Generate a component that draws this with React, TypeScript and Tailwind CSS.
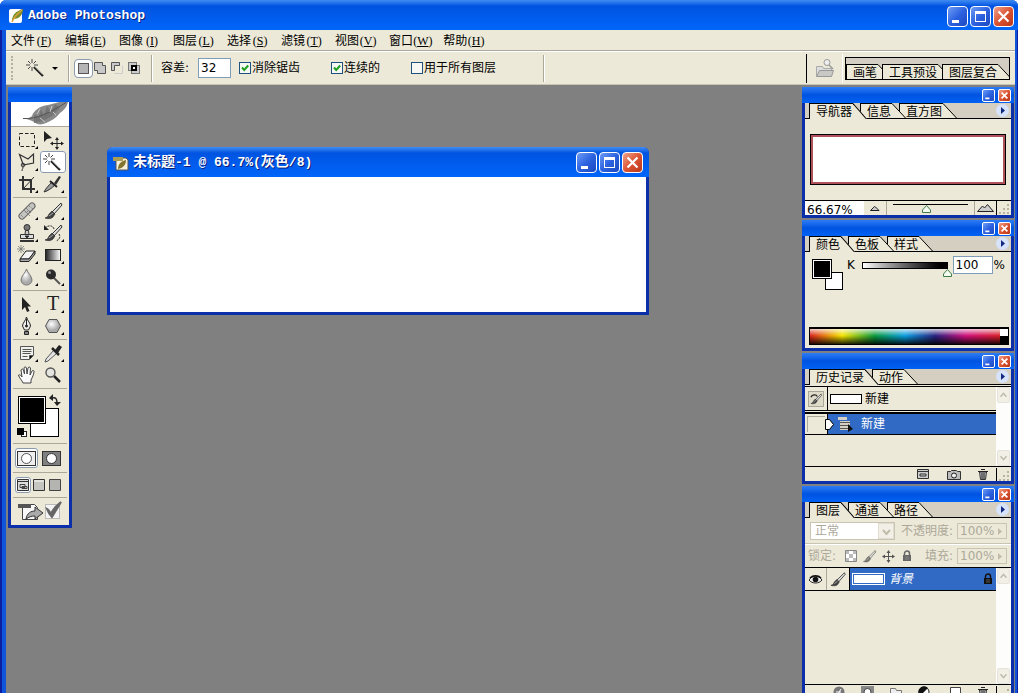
import React from 'react';
import { clsx } from 'clsx';

const MONO = "font-['Liberation_Mono','Noto_Sans_CJK_SC',monospace]";

const menus = [
  { name: '文件', key: 'F' },
  { name: '编辑', key: 'E' },
  { name: '图像', key: 'I' },
  { name: '图层', key: 'L' },
  { name: '选择', key: 'S' },
  { name: '滤镜', key: 'T' },
  { name: '视图', key: 'V' },
  { name: '窗口', key: 'W' },
  { name: '帮助', key: 'H' },
];

function Wand() {
  return (
    <g>
      <path d="M11 10l9 9" stroke="#222" strokeWidth="2.2" />
      <path d="M11.5 9.5l8 8" stroke="#aaa" strokeWidth="0.8" />
      <path d="M9 2v4M9 10v4M3 8h4M11 8h4M5 4l2.5 2.5M13 4l-2.5 2.5M5 12l2.5-2.5" stroke="#444" />
    </g>
  );
}

function Brush() {
  return (
    <g>
      <path d="M21 3L12 12l2 2L22 5z" fill="#ddd" stroke="#333" />
      <path d="M12 11l3 3-2 3c-2 2-5 2-8 1 3-1 3-2 4-4z" fill="#444" stroke="#222" strokeWidth="0.6" />
      <path d="M9 16l4-3" stroke="#aaa" />
    </g>
  );
}

const toolGroups = [
  [
    { name: '矩形选框', more: true, art: <rect x="5.5" y="4.5" width="15" height="13" fill="none" stroke="#222" strokeDasharray="3.5 2" /> },
    {
      name: '移动',
      art: (
        <g>
          <path d="M4 2v11l3-3 5-1z" fill="#222" />
          <path d="M17 10v9M12.500 14.500h9" stroke="#222" />
          <path d="M17 8l2 3h-4zM17 21l2-3h-4zM10 14.500l3-2v4zM24 14.500l-3-2v4z" fill="#222" />
        </g>
      ),
    },
    {
      name: '多边形套索',
      more: true,
      art: (
        <g fill="none" stroke="#333">
          <path d="M9 13L5.5 3.5 14 8l5.500-5v9L9 14z" strokeWidth="1.2" />
          <circle cx="9" cy="14" r="1.800" />
          <path d="M9 16c0 2-1 2-1 4" />
        </g>
      ),
    },
    { name: '魔棒', active: true, art: <Wand /> },
    {
      name: '裁切',
      more: true,
      art: (
        <g fill="none" stroke="#333">
          <path d="M9 3v13h12M5 7h12v13" strokeWidth="2" />
          <path d="M10 15l10-11" />
        </g>
      ),
    },
    {
      name: '切片',
      more: true,
      art: (
        <g>
          <path d="M4 19c2-4 5-7 8-10l3 3c-3 3-7 6-11 7z" fill="#999" stroke="#333" />
          <path d="M14 10l5-7 2 1-5 8z" fill="#333" />
          <path d="M10 8l7 6" stroke="#222" strokeWidth="2" />
        </g>
      ),
    },
  ],
  [
    {
      name: '修复画笔',
      more: true,
      art: (
        <g>
          <path d="M8 16L18 6" stroke="#666" strokeWidth="7" strokeLinecap="round" />
          <path d="M8 16L18 6" stroke="#c4c4c0" strokeWidth="5" strokeLinecap="round" />
          <path d="M10 10l6 6M12 8l5 5" stroke="#777" strokeWidth="0.8" />
          <path d="M7 15l3 3M15 6l4 3M11 12l5-1" stroke="#777" strokeDasharray="1 1" />
        </g>
      ),
    },
    { name: '画笔', more: true, art: <Brush /> },
    {
      name: '仿制图章',
      more: true,
      art: (
        <g stroke="#333">
          <circle cx="13" cy="5.500" r="3" fill="#777" />
          <path d="M11.500 8.500h3l.5 4h-4z" fill="#ccc" />
          <path d="M6.500 12.500h13v4h-13z" fill="#ddd" />
          <path d="M6 19h14" strokeWidth="2" />
          <path d="M11 14h4l-2 2z" fill="#222" />
        </g>
      ),
    },
    {
      name: '历史记录画笔',
      more: true,
      art: (
        <g>
          <Brush />
          <path d="M5 6c3-3 8-3 9 1M19 12c2 3 0 6-3 7" fill="none" stroke="#222" strokeDasharray="2 1" />
          <path d="M4 3v5h5z" fill="#222" />
        </g>
      ),
    },
    {
      name: '橡皮擦',
      more: true,
      art: (
        <g stroke="#222">
          <path d="M6 15l6-8h9l-6 8z" fill="#f4f4f4" />
          <path d="M6 15v2.500h9L21 10V7l-6 8H6" fill="#aaa" />
          <path d="M7 1v8M3 5h8M4 2l6 6M10 2L4 8" stroke="#777" strokeWidth="0.8" />
        </g>
      ),
    },
    { name: '渐变', more: true, art: <rect x="5.500" y="5.500" width="15" height="11" fill="url(#ramp)" stroke="#222" /> },
    { name: '模糊', more: true, art: <path d="M12.500 3c1 4 5.500 7 5.500 11a5.500 5 0 0 1-11 0c0-4 4.500-7 5.500-11z" fill="url(#ball)" stroke="#777" /> },
    {
      name: '减淡',
      more: true,
      art: (
        <g>
          <path d="M13 11l7 7" stroke="#555" strokeWidth="2" />
          <circle cx="11" cy="8.500" r="5" fill="#2a2a2a" />
          <circle cx="9.500" cy="6.500" r="1.500" fill="#999" />
        </g>
      ),
    },
  ],
  [
    { name: '路径选择', more: true, art: <path d="M8 4v13l3-3 2 5 2.500-1-2-4.500H17z" fill="#222" /> },
    {
      name: '文字',
      more: true,
      art: (
        <text x="13" y="17" textAnchor="middle" fill="#222" className="font-['Liberation_Serif',serif] text-[20px]">
          T
        </text>
      ),
    },
    {
      name: '钢笔',
      more: true,
      art: (
        <g stroke="#222">
          <path d="M12.500 2c1 4 4 6 4 9l-2 4h-4l-2-4c0-3 3-5 4-9z" fill="#eee" />
          <path d="M12.500 4v7" />
          <circle cx="12.500" cy="11" r="1" fill="#222" />
          <path d="M10.500 16.500h4v3h-4z" fill="#888" />
        </g>
      ),
    },
    { name: '多边形', more: true, art: <path d="M9 4.500h8l3.500 6.500-3.500 6.500H9L5.500 11z" fill="url(#ball)" stroke="#555" /> },
  ],
  [
    {
      name: '注释',
      more: true,
      art: (
        <g stroke="#555">
          <path d="M6.500 4.500h13v9l-4 4h-9z" fill="#f0f0ec" />
          <path d="M19 13.500h-3.500V17M8.500 7.500h9M8.500 9.500h9M8.500 11.500h8M8.500 14.500h5" />
        </g>
      ),
    },
    {
      name: '吸管',
      more: true,
      art: (
        <g>
          <path d="M14 8L6 17l-1 3 3-1 9-8z" fill="#e4e4e4" stroke="#555" />
          <path d="M12 6l7 7" stroke="#222" strokeWidth="2.500" />
          <path d="M15 8l4-5 3 2-4 6z" fill="#222" />
        </g>
      ),
    },
    {
      name: '抓手',
      art: (
        <path
          d="M9 19c-1-3-4-5-4.500-8 1.500-1 3 1 3.500 2L7 6c1-1.500 2-1 2.500 0l1 4-.5-6c.5-1.500 2-1.500 2.500 0l.5 6 1-6c1-1.500 2-1 2.500 0l-.5 7 2-4c1-1 2.500-.5 2 1-.5 3-1.500 5-3 8v3z"
          fill="#fafafa"
          stroke="#444"
        />
      ),
    },
    {
      name: '缩放',
      art: (
        <g>
          <path d="M14 12l6 6" stroke="#222" strokeWidth="2.500" />
          <circle cx="10.500" cy="8.500" r="4.500" fill="#e4e4e0" stroke="#555" strokeWidth="1.400" />
        </g>
      ),
    },
  ],
];

function Caption({ small = false, noMax = false }: { small?: boolean; noMax?: boolean }) {
  const size = small ? 'size-[13px] rounded-[2px]' : 'size-[21px] rounded-[4px]';
  return (
    <div className={clsx('flex', small ? 'gap-[3px]' : 'gap-[2px]')}>
      <button aria-label="最小化" className={clsx(size, 'border border-white bg-linear-to-br from-[#6f9cf5] via-[#2d62e0] to-[#1c48c0]')}>
        <svg viewBox="0 0 19 19" className="block size-full"><path d="M4 13h7v3H4z" fill="#fff" /></svg>
      </button>
      {!noMax && (
        <button aria-label="最大化" className={clsx(size, 'border border-white bg-linear-to-br from-[#6f9cf5] via-[#2d62e0] to-[#1c48c0]')}>
          <svg viewBox="0 0 19 19" className="block size-full"><path d="M4 4h11v11H4zM5 7v7h9V7z" fill="#fff" fillRule="evenodd" /></svg>
        </button>
      )}
      <button aria-label="关闭" className={clsx(size, 'border border-white bg-linear-to-br from-[#eda08a] via-[#dc5432] to-[#b8371a]')}>
        <svg viewBox="0 0 19 19" className="block size-full"><path d="M4.500 4.500l10 10M14.500 4.500l-10 10" stroke="#fff" strokeWidth={small ? 3 : 2.2} /></svg>
      </button>
    </div>
  );
}

function Tab({ name, active = false, className }: { name: string; active?: boolean; className?: string }) {
  return (
    <button className={clsx('flex shrink-0 items-stretch', active ? 'h-4' : 'h-[15px]', className)}>
      <span className="overflow-hidden border-l border-t border-black bg-[#ece9d8] pl-[6px] pr-px leading-[16px]">{name}</span>
      <svg width="14" viewBox="0 0 14 15" preserveAspectRatio="none" className="block h-full">
        <path d="M0 0L14 15H0z" fill="#ece9d8" />
        <path d="M0 .5L13.500 15" stroke="#000" />
      </svg>
    </button>
  );
}

const stack = ['z-30', 'z-20', 'z-10'];

function Palette({ tabs, className, children }: { tabs: string[]; className?: string; children: React.ReactNode }) {
  return (
    <section className={clsx('flex flex-col border-x-[3px] border-b-[3px] border-[#0a2fa8] bg-[#ece9d8]', className)}>
      <header className="-mx-[3px] flex h-4 shrink-0 items-center justify-end bg-linear-to-b from-[#2c7cf6] via-[#0053e1] to-[#0062f5] pr-[3px]">
        <Caption small noMax />
      </header>
      <div className="flex h-4 shrink-0 items-start border-b border-black bg-[#d4cfc0] pl-1">
        {tabs.map((t, i) => (
          <Tab key={t} name={t} active={i === 0} className={clsx('relative', stack[i], i > 0 && '-ml-[7px]')} />
        ))}
        <button aria-label="面板菜单" className="ml-auto mr-[2px] mt-px grid size-[13px] place-items-center rounded-full bg-[#d7e2fb]">
          <svg width="5" height="7"><path d="M1 0l4 3.500L1 7z" fill="#112a80" /></svg>
        </button>
      </div>
      {children}
    </section>
  );
}

function Scroller() {
  return (
    <div className="flex w-[15px] shrink-0 flex-col justify-between bg-[#fdfdfb] px-px">
      {['M3 9l3.500-4L10 9', 'M3 5l3.500 4L10 5'].map((d) => (
        <button key={d} aria-label="滚动" className="h-4 rounded-[2px] border border-[#e6e4da] bg-[#f1efe6]">
          <svg viewBox="0 0 13 14" className="block size-full"><path d={d} fill="none" stroke="#bdbbae" strokeWidth="1.800" /></svg>
        </button>
      ))}
    </div>
  );
}

function Grip() {
  return (
    <svg width="14" height="13" className="block shrink-0">
      <path d="M10 3h2v2h-2zM6 7h2v2H6zM10 7h2v2h-2zM2 11h2v2H2zM6 11h2v2H6zM10 11h2v2h-2z" fill="#b8b4a2" />
    </svg>
  );
}

function Trash() {
  return (
    <svg width="12" height="12" className="block">
      <path d="M2.500 4h7l-1 7.500h-5z" fill="#bbb" stroke="#333" />
      <path d="M1 3.500h10M4 1.500h4M5 5v6M7 5v6" stroke="#222" />
    </svg>
  );
}

function Lock({ color = '#666' }: { color?: string }) {
  return (
    <svg width="10" height="12" className="block shrink-0">
      <path d="M2.500 6V3.500a2.500 2.500 0 0 1 5 0V6" fill="none" stroke={color} strokeWidth="1.500" />
      <rect x="1" y="5" width="8" height="6" fill={color} />
      <path d="M3 7h4M3 9h4" stroke="#aaa" strokeWidth="0.500" />
    </svg>
  );
}

function Thumb() {
  return (
    <svg width="9" height="8" className="block">
      <path d="M4.500 .5L8.500 5v2.500h-8V5z" fill="#f4fbf0" stroke="#3f7d46" />
    </svg>
  );
}

function Check({ id, label, on = false, className }: { id: string; label: string; on?: boolean; className?: string }) {
  return (
    <div className={clsx('flex items-center gap-px', className)}>
      <div className="grid size-3">
        <input
          id={id}
          type="checkbox"
          defaultChecked={on}
          className="peer col-start-1 row-start-1 size-3 appearance-none border border-[#1c5180] bg-[#f7f7f4]"
        />
        <svg viewBox="0 0 12 12" className="pointer-events-none invisible col-start-1 row-start-1 size-3 peer-checked:visible">
          <path d="M3 5.500l2.200 2.500L9.200 3.500" fill="none" stroke="#21a121" strokeWidth="2" />
        </svg>
      </div>
      <label htmlFor={id}>{label}</label>
    </div>
  );
}

function Divider({ className }: { className?: string }) {
  return <div className={clsx('h-[27px] w-[2px] border-l border-[#aca899] bg-white', className)} />;
}

const unions = [
  { name: '新选区', art: <rect x="3.500" y="3.500" width="10" height="10" fill="#b5b5b5" stroke="#555" /> },
  { name: '添加到选区', art: <path d="M2.500 2.500h8v3h3v8h-8v-3h-3z" fill="#c8c8c8" stroke="#555" /> },
  { name: '从选区减去', art: <g><path d="M2.500 10.500v-8h8v3h-5v5z" fill="#c8c8c8" stroke="#555" /><path d="M5.500 13.500h8v-8" fill="none" stroke="#ccc" /></g> },
  { name: '与选区交叉', art: <g fill="#ccc" stroke="#777"><rect x="2.500" y="2.500" width="8" height="8" /><rect x="5.500" y="5.500" width="8" height="8" /><rect x="6" y="6" width="4" height="4" fill="#fff" stroke="#000" strokeWidth="2" /></g> },
];

function OptionsBar() {
  return (
    <div className="flex h-[33px] shrink-0 items-center border-b border-[#c9c5b4] bg-[#ece9d8]">
      <div className="ml-[5px] h-6 w-[3px] border-l-2 border-dotted border-[#b5b19f]" />
      <button aria-label="魔棒" className="flex w-[54px] items-center gap-[6px] pl-[10px]">
        <svg width="22" height="20" viewBox="1 1 22 20"><Wand /></svg>
        <svg width="6" height="3"><path d="M0 0h6L3 3z" /></svg>
      </button>
      <Divider />
      <div className="ml-[5px] flex">
        {unions.map((u, i) => (
          <button key={u.name} aria-label={u.name} className={clsx('size-[17px]', i === 0 && 'rounded-[3px] bg-white outline outline-[#8a9bb0]')}>
            <svg viewBox="0 0 17 17" className="block size-full">{u.art}</svg>
          </button>
        ))}
      </div>
      <Divider className="ml-2" />
      <label htmlFor="tolerance" className="ml-2">容差:</label>
      <input id="tolerance" defaultValue="32" className="ml-[9px] h-5 w-[33px] border border-[#7f9db9] bg-white px-[2px]" />
      <Check id="aa" label="消除锯齿" on className="ml-2" />
      <Check id="contig" label="连续的" on className="ml-[31px]" />
      <Check id="all" label="用于所有图层" className="ml-[31px]" />
      <Divider className="ml-[47px]" />

      <div className="ml-auto h-[29px] w-px bg-black" />
      <button aria-label="文件浏览器" className="ml-2">
        <svg width="20" height="20">
          <path d="M1.500 18V8.500h6l1 2h8V18z" fill="#ddd" stroke="#aaa" />
          <path d="M1.500 18.500l3-6h14l-2 6z" fill="#c8c8c4" stroke="#999" />
          <circle cx="12" cy="4.500" r="3" fill="#eee" stroke="#999" />
          <path d="M14 7l4 4" stroke="#999" strokeWidth="1.500" />
        </svg>
      </button>
      <div className="ml-[7px] h-[29px] w-px bg-white" />
      <div className="ml-[2px] mr-[5px] flex h-[23px] w-[165px] items-end overflow-hidden border border-black bg-[#d4cdc4]">
        <Tab name="画笔" />
        <Tab name="工具预设" className="-ml-[10px]" />
        <Tab name="图层复合" className="-ml-[10px]" />
      </div>
    </div>
  );
}

function Toolbox() {
  return (
    <aside className="w-16 border-x-[3px] border-b-[3px] border-[#0a2fa8] bg-[#ece9d8]">
      <div className="-mx-[3px] h-[15px] bg-linear-to-b from-[#2c7cf6] via-[#0053e1] to-[#0062f5]" />
      <div className="h-[25px] border-b border-[#aca899] bg-white">
        <svg width="58" height="24" className="block">
          <defs>
            <linearGradient id="ramp"><stop stopColor="#222" /><stop offset="1" stopColor="#fff" /></linearGradient>
            <radialGradient id="ball" cx=".4" cy=".35"><stop stopColor="#fff" /><stop offset="1" stopColor="#aaa" /></radialGradient>
          </defs>
          <path d="M11 16c5 1 8 0 10-2 2-6 8-10 16-11 6-1 8-3 14-3h6c-1 5-4 8-8 11-4 5-9 8-14 10-4 2-9 2-12-1-3-2-7-3-12-4z" fill="#8a8a8a" />
          <path d="M23 13l5 1 2-7 3 6 3-9 4 6 4-8 5 4-8 8-9 5-9 2z" fill="#757575" />
          <path d="M12 16.500c14 1 27-6 43-16" fill="none" stroke="#555" />
          <path d="M26 12l3-5M39 10l2-6M29 16l5 4M42 10l3 3" stroke="#c8c8c8" />
        </svg>
      </div>
      {toolGroups.map((group, i) => (
        <div key={i} className="mx-[2px] flex flex-wrap border-b border-[#aca899] px-px py-[2px]">
          {group.map((tool) => (
            <button
              key={tool.name}
              aria-label={tool.name}
              className={clsx('h-[22px] w-1/2', tool.active && 'rounded-[3px] bg-white outline -outline-offset-1 outline-[#8a9bb0]')}
            >
              <svg viewBox="0 0 26 22" className="block size-full">
                {tool.art}
                {tool.more && <path d="M24 17v3h-3z" fill="#000" />}
              </svg>
            </button>
          ))}
        </div>
      ))}
      <div className="mx-[2px] h-[55px] border-b border-[#aca899]">
        <svg width="52" height="54" className="block">
          <rect x="17.500" y="19.500" width="28" height="28" fill="#fff" stroke="#000" />
          <rect x="5.500" y="7.500" width="27" height="27" fill="#fff" stroke="#000" />
          <rect x="7" y="9" width="24" height="24" />
          <path d="M39 9c4-1 5 1 5 5" fill="none" stroke="#222" strokeWidth="1.500" />
          <path d="M36 9l4-4v7zM41 13h7l-4 4z" fill="#222" />
          <rect x="8.500" y="42.500" width="5" height="5" fill="#fff" stroke="#222" />
          <rect x="4" y="39" width="7" height="7" />
        </svg>
      </div>
      <div className="mx-[2px] flex h-[29px] items-center gap-[3px] border-b border-[#aca899] pl-[2px]">
        <button aria-label="标准模式" className="grid h-5 w-[23px] place-items-center rounded-[3px] border border-[#8a9bb0] bg-white">
          <svg width="19" height="15"><rect x=".5" y=".5" width="18" height="14" fill="#eee" stroke="#333" /><circle cx="9.500" cy="7.500" r="5" fill="#fff" stroke="#555" /></svg>
        </button>
        <button aria-label="快速蒙版" className="grid h-5 w-[21px] place-items-center">
          <svg width="19" height="15"><rect x=".5" y=".5" width="18" height="14" fill="#808080" stroke="#333" /><circle cx="9.500" cy="7.500" r="5" fill="#fff" stroke="#333" /></svg>
        </button>
      </div>
      <div className="mx-[2px] flex h-[25px] items-center border-b border-[#aca899] pl-[2px]">
        <button aria-label="标准屏幕" className="grid size-4 place-items-center rounded-[3px] border border-[#8a9bb0] bg-white">
          <svg width="12" height="12"><path d="M.5 .5h11v11H.5zM.5 2.500h11" fill="#ddd" stroke="#333" /><path d="M3 5.500h5v3H3zM5 7.500h5v2H5z" fill="none" stroke="#444" /></svg>
        </button>
        <button aria-label="带菜单栏全屏" className="grid size-4 place-items-center">
          <svg width="12" height="12"><path d="M.5 .5h11v11H.5z" fill="#c6c6c0" stroke="#333" /><path d="M1 2h10" stroke="#fff" /></svg>
        </button>
        <button aria-label="全屏" className="grid size-4 place-items-center">
          <svg width="12" height="12"><path d="M.5 .5h11v11H.5z" fill="#b4b4b0" stroke="#444" /></svg>
        </button>
      </div>
      <button aria-label="跳转到 ImageReady" className="block h-[27px] w-full">
        <svg viewBox="0 0 58 27" className="block size-full">
          <path d="M11.500 6.500h12l3 3v12h-15z" fill="#f8f8f8" stroke="#444" />
          <path d="M7 6h13v4H7z" fill="#555" />
          <path d="M15 21c1-6 5-8 9-8V9l8 6-8 6v-3c-4 0-6 1-9 3z" fill="#aaa" stroke="#333" />
          <rect x="34.500" y="6.500" width="14" height="14" fill="#f4f4f4" stroke="#bbb" />
          <path d="M36 11c2 1 3 3 4 5 2-5 6-9 10-12-3 5-6 10-9 15-2-2-4-5-5-8z" fill="#666" stroke="#666" strokeWidth="2" />
        </svg>
      </button>
    </aside>
  );
}

function DocumentWindow() {
  return (
    <section className="absolute left-[101px] top-[62px] flex h-[168px] w-[542px] flex-col rounded-t-[6px] border-x-[3px] border-b-[3px] border-[#0a2fa8] bg-white">
      <header className="-mx-[3px] flex h-[30px] shrink-0 items-center rounded-t-[6px] bg-linear-to-b from-[#3f8cf3] via-[#0053e1] via-20% to-[#0066fa] px-[6px] pt-px">
        <svg width="16" height="16" className="shrink-0">
          <path d="M3 3h10l2 2v10H3z" fill="#f6f1dc" stroke="#555" />
          <path d="M0 2h10v4H0z" fill="#a89b56" />
          <path d="M5 14c0-5 3-8 8-9 0 5-3 8-8 9z" fill="#81752f" />
        </svg>
        <h2 className={clsx(MONO, 'ml-1 flex-1 whitespace-pre text-[13px] font-bold text-white [text-shadow:1px_1px_0_#0a1e7a]')}>
          <span className="text-[14px]">未标题</span>-1 @ 66.7%(<span className="text-[14px]">灰色</span>/8)
        </h2>
        <Caption />
      </header>
    </section>
  );
}

function Navigator() {
  return (
    <Palette tabs={['导航器', '信息', '直方图']} className="h-[131px]">
      <div className="flex-1 px-[5px] py-[15px]">
        <div className="h-full border border-black bg-white">
          <div className="h-full border-2 border-[#b0525c]" />
        </div>
      </div>
      <div className="flex h-[15px] shrink-0 border-t border-black">
        <input aria-label="缩放比例" defaultValue="66.67%" className="w-[59px] bg-white px-[2px] pt-[3px] leading-[14px]" />
        <button aria-label="缩小" className="grid w-[23px] place-items-center border-r border-[#aca899]">
          <svg width="10" height="6"><path d="M.5 5.500l4-4 1 .5 3.500 3.500z" fill="#ccc" stroke="#222" /></svg>
        </button>
        <div className="grid flex-1 px-[6px]">
          <div className="col-start-1 row-start-1 mt-[3px] flex flex-col items-center border-t border-black pr-[9px]"><Thumb /></div>
          <input type="range" aria-label="缩放滑块" className="col-start-1 row-start-1 w-full opacity-0" />
        </div>
        <button aria-label="放大" className="grid w-[22px] place-items-center border-l border-[#aca899]">
          <svg width="17" height="8"><path d="M.5 7.500l5-5.500 2 2 3-3.500 6 7z" fill="#ccc" stroke="#222" /></svg>
        </button>
        <div className="border-l border-black"><Grip /></div>
      </div>
    </Palette>
  );
}

function ColorPalette() {
  return (
    <Palette tabs={['颜色', '色板', '样式']} className="h-[131px]">
      <div className="flex flex-1 items-start pl-[7px] pr-[6px] pt-1">
        <svg width="32" height="34" className="mt-[3px] block shrink-0">
          <rect x="13.500" y="13.500" width="17" height="17" fill="#fff" stroke="#000" />
          <rect x=".5" y=".5" width="19" height="19" fill="#fff" stroke="#000" />
          <rect x="2" y="2" width="16" height="16" />
        </svg>
        <label htmlFor="k" className="ml-[3px] w-[15px] leading-[19px]">K</label>
        <div className="grid flex-1">
          <div className="col-start-1 row-start-1 pt-[6px]">
            <div className="h-[7px] border border-black bg-linear-to-r from-white to-black" />
            <div className="-mr-1 flex justify-end"><Thumb /></div>
          </div>
          <input id="k" type="range" defaultValue={100} className="col-start-1 row-start-1 w-full opacity-0" />
        </div>
        <input aria-label="K 值" defaultValue="100" className="ml-[5px] h-[18px] w-10 border border-[#7f9db9] bg-white px-[2px]" />
        <span className="ml-px leading-[19px]">%</span>
      </div>
      <div className="mb-[3px] ml-1 mr-[2px] flex h-[18px] border border-t-2 border-black">
        <div className="flex-1 [background-image:linear-gradient(to_bottom,rgba(255,255,255,.75),transparent_45%,rgba(0,0,0,.85)),linear-gradient(to_right,#d8231c,#f4e400_17%,#0a9a3c_34%,#0a9ee0_50%,#2a2280_66%,#d0107c_82%,#d81e28)]" />
        <div className="w-2 border-b-8 border-black bg-white" />
      </div>
    </Palette>
  );
}

function History() {
  return (
    <Palette tabs={['历史记录', '动作']} className="h-[131px]">
      <div className="mt-px flex min-h-0 flex-1 border-t border-black">
        <div className="flex-1">
          <div className="flex h-[24px] items-center border-b border-black">
            <button aria-label="历史画笔源" className="grid h-full w-[23px] place-items-center border-r border-black">
              <span className="block size-4 border border-[#aca899] bg-[#dedbc9]">
                <svg viewBox="2 1 22 20" className="block size-full"><Brush /><path d="M5 8c2-4 8-5 10-1" fill="none" stroke="#222" strokeWidth="2" /></svg>
              </span>
            </button>
            <div className="ml-[2px] h-[10px] w-8 border border-black bg-white" />
            <span className="ml-[3px]">新建</span>
          </div>
          <div className="mt-px flex h-[23px] items-stretch border-b border-t-2 border-black">
            <div className="w-[23px] border-r border-black p-[2px]"><div className="h-full border-l border-t border-[#aca899]" /></div>
            <div className="flex flex-1 items-center bg-[#316ac5] text-white">
              <svg width="9" height="11" className="-ml-[3px]"><path d="M.5 .5h4l4 5-4 5h-4z" fill="#fff" stroke="#000" /></svg>
              <svg width="16" height="16" className="ml-1">
                <path d="M0 1h9v3H0zM2 5h10v9H2z" fill="#d4d0c4" />
                <path d="M2 6.500h10M2 9.500h10M2 12.500h9" stroke="#555" />
                <path d="M10 8v8l5-3z" fill="#111" />
              </svg>
              <span className="ml-[7px]">新建</span>
            </div>
          </div>
        </div>
        <Scroller />
      </div>
      <div className="flex h-[15px] shrink-0 items-center justify-end border-t border-black">
        <button aria-label="新建文档"><svg width="12" height="10"><path d="M.5 .5h11v9H.5zM.5 2.500h11M3 5h6v2H3z" fill="#ccc" stroke="#333" /></svg></button>
        <button aria-label="新建快照" className="ml-[18px]">
          <svg width="14" height="11"><path d="M.5 2.500h3l1-1h5l1 1h3v8H.5z" fill="#bbb" stroke="#333" /><circle cx="7" cy="6.500" r="2.500" fill="#eee" stroke="#222" /></svg>
        </button>
        <button aria-label="删除" className="ml-4 mr-[7px]"><Trash /></button>
        <div className="border-l border-black"><Grip /></div>
      </div>
    </Palette>
  );
}

function PercentField({ id, label }: { id: string; label: string }) {
  return (
    <>
      <label htmlFor={id} className="ml-auto text-[#aca899]">{label}</label>
      <div className="ml-1 flex h-4 w-[50px] items-center border border-[#c9c5b2]">
        <input id={id} disabled defaultValue="100%" className="w-9 pl-[2px] leading-[14px] text-[#aca899]" />
        <svg width="6" height="7" className="ml-[3px]"><path d="M1 0l4 3.500L1 7z" fill="#c0bca9" /></svg>
      </div>
    </>
  );
}

function Layers() {
  return (
    <Palette tabs={['图层', '通道', '路径']} className="h-[216px]">
      <div className="flex h-[26px] shrink-0 items-center border-b border-[#c9c5b2] pl-[5px] pr-1 pt-px">
        <div className="flex h-[18px] w-[85px] items-center border border-[#c9c5b2] bg-white">
          <select aria-label="混合模式" disabled className="h-4 flex-1 appearance-none bg-white pl-1 text-[#aca899] opacity-100">
            <option>正常</option>
          </select>
          <svg width="16" height="16" className="border border-[#e0ddd0] bg-[#f1efe6]"><path d="M4 6l3.500 4L11 6" fill="none" stroke="#c0bca9" strokeWidth="2" /></svg>
        </div>
        <PercentField id="opacity" label="不透明度:" />
      </div>
      <div className="flex h-[23px] shrink-0 items-center border-t border-white pl-[3px] pr-1">
        <span className="text-[#aca899]">锁定:</span>
        <button aria-label="锁定透明像素" className="ml-[9px]">
          <svg width="12" height="12"><path d="M.5 .5h11v11H.5z" fill="#fff" stroke="#888" /><path d="M1 1h3v3H1zM8 1h3v3H8zM4 4h4v4H4zM1 8h3v3H1zM8 8h3v3H8z" fill="#bbb" /></svg>
        </button>
        <button aria-label="锁定图像像素" className="ml-[5px] opacity-70"><svg width="16" height="14" viewBox="4 1 20 19"><Brush /></svg></button>
        <button aria-label="锁定位置" className="ml-[4px]">
          <svg width="13" height="13"><path d="M6.500 1v11M1 6.500h11" stroke="#555" /><path d="M6.500 0l2 3h-4zM6.500 13l2-3h-4zM0 6.500l3-2v4zM13 6.500l-3-2v4z" fill="#555" /></svg>
        </button>
        <button aria-label="锁定全部" className="ml-[7px]"><Lock /></button>
        <PercentField id="fill" label="填充:" />
      </div>
      <div className="flex min-h-0 flex-1 border-t border-black">
        <div className="flex-1">
          <div className="flex h-[23px] items-stretch border-b border-black">
            <button aria-label="可见性" className="grid w-[22px] place-items-center border-r border-[#aca899]">
              <svg width="13" height="9"><path d="M0 5c3-5 10-5 13 0-3 4-10 4-13 0z" fill="#eee" stroke="#222" /><circle cx="6.500" cy="4.500" r="2.800" fill="#111" /><path d="M1 3c3-3 8-3 11 0" fill="none" stroke="#111" strokeWidth="1.500" /></svg>
            </button>
            <div className="grid w-[23px] place-items-center border-r border-black"><svg width="17" height="16" viewBox="4 1 20 19"><Brush /></svg></div>
            <div className="flex flex-1 items-center bg-[#316ac5] pl-[2px] pr-[3px] text-white">
              <div className="h-3 w-[33px] border border-white bg-white outline -outline-offset-2 outline-[#316ac5]" />
              <span className="ml-1 flex-1 italic">背景</span>
              <Lock color="#111" />
            </div>
          </div>
        </div>
        <Scroller />
      </div>
      <div className="flex h-[15px] shrink-0 items-center justify-end border-t border-black">
        <button aria-label="图层样式"><svg width="12" height="12"><circle cx="6" cy="6" r="5.500" fill="#777" /><path d="M4 10L8 3M3 6h5" stroke="#fff" /></svg></button>
        <button aria-label="图层蒙版" className="ml-4"><svg width="13" height="12"><rect width="13" height="12" fill="#888" /><circle cx="6.500" cy="6" r="3.500" fill="#fff" stroke="#444" /></svg></button>
        <button aria-label="新建组" className="ml-4"><svg width="12" height="11"><path d="M.5 1.500h5l1 2h5v7H.5z" fill="#eee" stroke="#777" /></svg></button>
        <button aria-label="调整图层" className="ml-4"><svg width="12" height="12"><circle cx="6" cy="6" r="5" fill="#fff" stroke="#222" /><path d="M2 10A5 5 0 0 1 10 2z" fill="#111" /></svg></button>
        <button aria-label="新建图层" className="ml-5"><svg width="11" height="11"><path d="M.5 .5h10v10h-6l-4-4z" fill="#fff" stroke="#444" /><path d="M1 6.500h3.500V10" fill="none" stroke="#444" /></svg></button>
        <button aria-label="删除图层" className="ml-4 mr-[7px]"><Trash /></button>
        <div className="border-l border-black"><Grip /></div>
      </div>
    </Palette>
  );
}

export default function App() {
  return (
    <div className="flex h-screen flex-col overflow-hidden rounded-t-[6px] bg-[#0b43d0] font-['DejaVu_Sans','Noto_Sans_CJK_SC',sans-serif] text-[12px] leading-[16px] text-black">
      <header className="flex h-[30px] shrink-0 items-center bg-linear-to-b from-[#3f8cf3] via-[#0053e1] via-20% to-[#0066fa] pl-2 pr-1 pt-[2px]">
        <svg width="16" height="16" className="shrink-0">
          <rect x="1" y="1" width="13" height="14" rx="2" fill="#fff" />
          <path d="M4 13c0-6 4-10 11-12 0 6-4 10-9 10z" fill="#7b8c2c" />
          <path d="M4 14C6 9 9 6 14 2" fill="none" stroke="#d9a53a" strokeWidth="1.500" />
        </svg>
        <h1 className={clsx(MONO, 'ml-1 flex-1 text-[13px] font-bold text-white [text-shadow:1px_1px_0_#0a1e7a]')}>Adobe Photoshop</h1>
        <Caption />
      </header>
      <div className="flex min-h-0 flex-1 flex-col border-l-[2px] border-r-[1px] border-[#0a1fa0]">
        <div className="flex min-h-0 flex-1 flex-col border-l-4 border-r-2 border-[#0f55dc]">
          <nav className="flex h-[22px] shrink-0 items-center gap-3 border-b border-white bg-[#ece9d8] pl-[5px] shadow-[inset_0_-1px_0_#aca899]">
            {menus.map((m) => (
              <button key={m.key} className="flex items-center">
                {m.name}
                <span className="w-[18px] font-['Liberation_Serif',serif] text-[12px]">(<u>{m.key}</u>)</span>
              </button>
            ))}
          </nav>
          <OptionsBar />
          <main className="relative flex min-h-0 flex-1 items-start justify-between bg-[#808080] pl-[2px] pr-px pt-[2px]">
            <Toolbox />
            <DocumentWindow />
            <div className="flex w-[212px] flex-col gap-[2px]">
              <Navigator />
              <ColorPalette />
              <History />
              <Layers />
            </div>
          </main>
        </div>
      </div>
    </div>
  );
}
